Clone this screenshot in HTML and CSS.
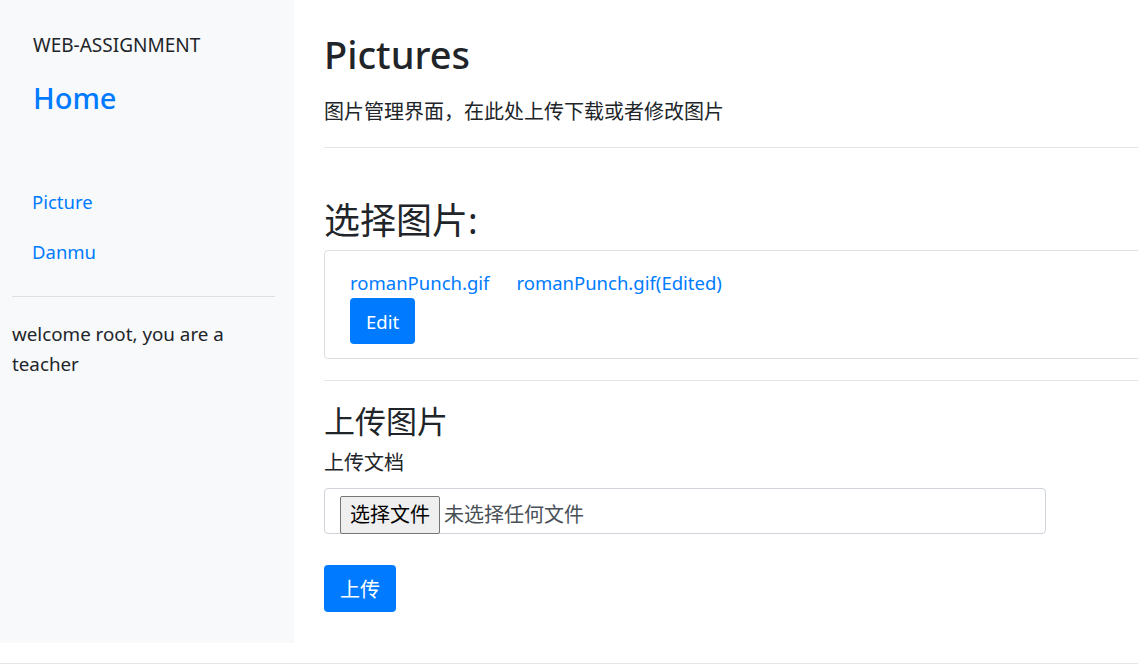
FILE: index.html
```html
<!DOCTYPE html>
<html lang="zh-CN">
<head>
<meta charset="utf-8">
<title>Pictures</title>
<link rel="stylesheet" href="styles.css">
</head>
<body>
<div class="layout">
  <aside class="sidebar">
    <div class="brand">WEB-ASSIGNMENT</div>
    <a class="home" href="#">Home</a>
    <nav class="nav">
      <a class="nav-link" href="#">Picture</a>
      <a class="nav-link" href="#">Danmu</a>
    </nav>
    <hr class="side-rule">
    <p class="welcome">welcome root, you are a teacher</p>
  </aside>
  <main class="main">
    <h1 class="title">Pictures</h1>
    <p class="lead zh">图片管理界面，在此处上传下载或者修改图片</p>
    <hr class="rule rule-top">
    <h2 class="section-title">选择图片:</h2>
    <div class="card">
      <div class="links">
        <a href="#" class="file-link">romanPunch.gif</a>
        <a href="#" class="file-link">romanPunch.gif(Edited)</a>
      </div>
      <button class="btn btn-edit" type="button">Edit</button>
    </div>
    <hr class="rule rule-mid">
    <h3 class="sub-title">上传图片</h3>
    <label class="label zh">上传文档</label>
    <div class="file-box">
      <span class="file-btn zh">选择文件</span>
      <span class="file-none zh">未选择任何文件</span>
    </div>
    <button class="btn btn-upload zh" type="button">上传</button>
  </main>
</div>
<hr class="footer-rule">
</body>
</html>
```

FILE: styles.css
```css
html, body {
  margin: 0;
  padding: 0;
}
body {
  font-family: "Noto Sans", "Noto Sans CJK SC", sans-serif;
  font-size: 18.5px;
  line-height: 30px;
  color: #212529;
  background: #fff;
  overflow: hidden;
  width: 1138px;
}
a {
  color: #007bff;
  text-decoration: none;
}
.zh {
  font-size: 20px;
}
.layout {
  display: flex;
  align-items: stretch;
}
.sidebar {
  width: 294px;
  flex: 0 0 294px;
  box-sizing: border-box;
  background: #f8f9fa;
  padding: 30px 19px 0 12px;
  display: flex;
  flex-direction: column;
}
.brand {
  padding-left: 21px;
  font-size: 19px;
  line-height: 30px;
  color: #212529;
}
.home {
  margin-top: 19px;
  padding-left: 21px;
  font-size: 29px;
  line-height: 38px;
  font-weight: 500;
}
.nav {
  margin-top: 60px;
  display: flex;
  flex-direction: column;
}
.nav-link {
  padding: 10px 20px;
  line-height: 30px;
}
.side-rule {
  margin: 19px 0 0;
  border: 0;
  border-top: 1px solid rgba(0,0,0,.1);
}
.welcome {
  margin: 22px 0 0;
  line-height: 30px;
  font-size: 18.8px;
}
.main {
  flex: 0 0 auto;
  width: 870px;
  box-sizing: border-box;
  padding: 27px 0 31px 30px;
}
.title {
  margin: 0;
  font-size: 38px;
  line-height: 54px;
  font-weight: 500;
}
.lead {
  margin: 16px 0 0;
  line-height: 30px;
}
.rule {
  border: 0;
  border-top: 1px solid rgba(0,0,0,.1);
  margin: 0;
}
.rule-top {
  margin-top: 20px;
}
.section-title {
  margin: 51px 0 0;
  font-size: 36px;
  line-height: 43px;
  font-weight: 400;
}
.card {
  margin-top: 8px;
  border: 1px solid rgba(0,0,0,.125);
  border-radius: 4px;
  padding: 17px 25px 14px;
}
.links {
  display: flex;
  gap: 27px;
}
.btn {
  display: block;
  border: 0;
  border-radius: 4px;
  background: #007bff;
  color: #fff;
  font-family: inherit;
  cursor: pointer;
}
.btn-edit {
  font-size: 18.5px;
  height: 46px;
  padding: 0 16px;
}
.rule-mid {
  margin-top: 21px;
}
.sub-title {
  margin: 21px 0 0;
  font-size: 31px;
  line-height: 38px;
  font-weight: 400;
}
.label {
  display: block;
  margin-top: 8px;
}
.file-box {
  margin-top: 10px;
  width: 722px;
  height: 46px;
  box-sizing: border-box;
  border: 1px solid #ced4da;
  border-radius: 4px;
  padding: 7px 0 0 15px;
  display: flex;
  align-items: flex-start;
}
.file-btn {
  box-sizing: border-box;
  height: 38px;
  width: 100px;
  background: #efefef;
  border: 1px solid #767676;
  border-radius: 2px;
  color: #000;
  text-align: center;
  line-height: 36px;
}
.file-none {
  margin-left: 4px;
  line-height: 38px;
  color: #495057;
}
.btn-upload {
  margin-top: 31px;
  height: 47px;
  padding: 0 16px;
}
.footer-rule {
  margin: 20px 0 0;
  border: 0;
  border-top: 1px solid rgba(0,0,0,.1);
}
```
